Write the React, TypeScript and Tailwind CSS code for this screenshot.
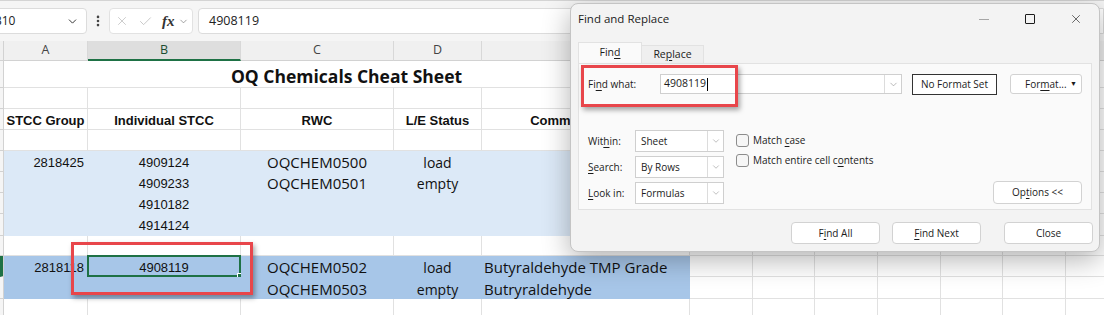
import type { ReactNode } from "react";
import clsx from "clsx";
import { X, Check, ChevronDown, EllipsisVertical } from "lucide-react";

const ARIAL = "font-['Liberation_Sans',Arial,sans-serif]";
const APTOS = "font-['Open_Sans',sans-serif]";
const SEGOE = "font-['Open_Sans',sans-serif]";

const GRID = "border-[#e1e1e1]";
const LIGHT = "bg-[#dce9f7] border-[#dce9f7]";
const DARK = "bg-[#a7c6e8] border-[#a7c6e8]";

const COL_W = ["w-[84px]", "w-[153px]", "w-[153px]", "w-[88px]", "w-[208px]"];
const EXTRA_W = ["w-[63px]", "w-[62px]", "w-[63px]", "w-[63px]", "w-[62px]", "w-[63px]", "w-[63px]"];

type CellDef = { t?: ReactNode; a?: "l" | "c" | "r"; f?: string; sel?: boolean };

function Cell({ w, fill, def }: { w: string; fill?: string; def?: CellDef }) {
  const align = def?.a ?? "c";
  return (
    <div
      className={clsx(
        "relative flex h-full shrink-0 items-center border-r border-b pt-[3px] whitespace-nowrap text-[#111]",
        w,
        fill ?? GRID,
        align === "l" && "justify-start pl-[2px]",
        align === "r" && "justify-end pr-[3px]",
        align === "c" && "justify-center",
        def?.f
      )}
    >
      {def?.t}
      {def?.sel && (
        <div className="absolute -top-px -left-px -right-px -bottom-px border-2 border-[#1e7145]">
          <div className="absolute -right-[4px] -bottom-[4px] h-[6px] w-[6px] border border-white bg-[#1e7145]" />
        </div>
      )}
    </div>
  );
}

function Row({ h, fill, cells, active }: { h: string; fill?: string; cells: (CellDef | undefined)[]; active?: boolean }) {
  return (
    <div className={clsx("flex", h)}>
      <div className={clsx("h-full w-[4px] shrink-0 border-r border-b border-[#d2d2d2] bg-[#f5f5f5]", active && "border-l-[3px] border-l-[#1e7145]")} />
      {COL_W.map((w, i) => (
        <Cell key={i} w={w} fill={fill} def={cells[i]} />
      ))}
      {EXTRA_W.map((w, i) => (
        <Cell key={"x" + i} w={w} />
      ))}
    </div>
  );
}

const num = clsx(ARIAL, "text-[13px]");
const rwc = clsx(APTOS, "text-[15px]");
const stat = clsx(APTOS, "text-[14px]");
const head = clsx(ARIAL, "text-[13px] font-bold");

function FormulaBar() {
  return (
    <div className={clsx("flex h-[41px] items-start border-t border-[#d4d4d4] bg-[#f5f5f5] pt-[7px]", SEGOE)}>
      <div className="-ml-[20px] flex h-[26px] w-[107px] items-center rounded-[4px] border border-[#dcdcdc] bg-white pl-[13px] pr-[7px] text-[12px] text-[#222]">
        B10
        <ChevronDown className="ml-auto text-[#333]" size={13} strokeWidth={1.8} />
      </div>
      <div className="flex h-[26px] w-[22px] items-center justify-center text-[#444]">
        <EllipsisVertical size={14} strokeWidth={2.5} />
      </div>
      <div className="flex h-[26px] w-[84px] items-center rounded-[4px] border border-[#e2e2e2] bg-white pl-[5px] text-[#bdbdbd]">
        <X size={14} strokeWidth={1.3} />
        <Check className="ml-[9px]" size={15} strokeWidth={1.3} />
        <span className="ml-[9px] font-['Liberation_Serif',serif] text-[15px] font-bold italic text-[#333]">fx</span>
        <ChevronDown className="ml-[3px] text-[#777]" size={11} strokeWidth={1.5} />
      </div>
      <div className="ml-[5px] flex h-[26px] flex-1 items-center rounded-l-[4px] border border-[#dcdcdc] bg-white pl-[10px] text-[12.5px] text-[#222]">
        4908119
      </div>
    </div>
  );
}

function ColumnHeaders() {
  const labels = ["A", "B", "C", "D", "E"];
  return (
    <div className={clsx("flex h-[20px] bg-[#f0f0f0] text-[12.5px] text-[#444]", SEGOE)}>
      <div className="h-full w-[4px] shrink-0 border-r border-b border-[#d2d2d2]" />
      {COL_W.map((w, i) => (
        <div
          key={i}
          className={clsx(
            "flex h-full shrink-0 items-center justify-center border-r border-[#d8d8d8]",
            w,
            i === 1 ? "border-b-2 border-b-[#1e7145] bg-[#dedede] text-[#1b4d32]" : "border-b border-b-[#d2d2d2]"
          )}
        >
          {labels[i]}
        </div>
      ))}
      {EXTRA_W.map((w, i) => (
        <div key={i} className={clsx("h-full shrink-0 border-r border-b border-[#d2d2d2]", w)} />
      ))}
    </div>
  );
}

function Sheet() {
  return (
    <div>
      <div className="flex h-[27px]">
        <div className="h-full w-[4px] shrink-0 border-r border-b border-[#d2d2d2] bg-[#f5f5f5]" />
        <div className={clsx("flex h-full w-[686px] shrink-0 items-center justify-center border-r border-b pt-[4px] text-[17.5px] font-bold text-[#111]", GRID, APTOS)}>
          OQ Chemicals Cheat Sheet
        </div>
        {EXTRA_W.map((w, i) => (
          <Cell key={i} w={w} />
        ))}
      </div>
      <Row h="h-[21px]" cells={[]} />
      <Row
        h="h-[21px]"
        cells={[
          { t: "STCC Group", f: head },
          { t: "Individual STCC", f: head },
          { t: "RWC", f: head },
          { t: "L/E Status", f: head },
          { t: "Commodity Name", f: head },
        ]}
      />
      <Row h="h-[21px]" cells={[]} />
      <Row
        h="h-[21px]"
        fill={LIGHT}
        cells={[
          { t: "2818425", a: "r", f: num },
          { t: "4909124", f: num },
          { t: "OQCHEM0500", f: rwc },
          { t: "load", f: stat },
        ]}
      />
      <Row h="h-[21px]" fill={LIGHT} cells={[undefined, { t: "4909233", f: num }, { t: "OQCHEM0501", f: rwc }, { t: "empty", f: stat }]} />
      <Row h="h-[21px]" fill={LIGHT} cells={[undefined, { t: "4910182", f: num }]} />
      <Row h="h-[22px]" fill={LIGHT} cells={[undefined, { t: "4914124", f: num }]} />
      <Row h="h-[20px]" cells={[]} />
      <Row
        h="h-[21px]"
        fill={DARK}
        active
        cells={[
          { t: "2818118", a: "r", f: num },
          { t: "4908119", f: num, sel: true },
          { t: "OQCHEM0502", f: rwc },
          { t: "load", f: stat },
          { t: "Butyraldehyde TMP Grade", a: "l", f: rwc },
        ]}
      />
      <Row
        h="h-[22px]"
        fill={DARK}
        cells={[undefined, undefined, { t: "OQCHEM0503", f: rwc }, { t: "empty", f: stat }, { t: "Butryraldehyde", a: "l", f: rwc }]}
      />
      <Row h="h-[21px]" cells={[]} />
    </div>
  );
}

function Select({ value }: { value: string }) {
  return (
    <div className="flex h-[22px] w-[89px] border border-[#cfcfcf] bg-white">
      <span className="flex flex-1 items-center pl-[5px]">{value}</span>
      <span className="flex w-[16px] items-center justify-center border-l border-[#dcdcdc] text-[#8a8a8a]">
        <ChevronDown size={10} strokeWidth={1.3} />
      </span>
    </div>
  );
}

function Box({ children }: { children: ReactNode }) {
  return (
    <div className="flex h-[20px] items-center">
      <span className="h-[13px] w-[13px] rounded-[3px] border border-[#8c8c8c] bg-[#f6f6f6]" />
      <span className="ml-[4px]">{children}</span>
    </div>
  );
}

function Btn({ children, className }: { children: ReactNode; className?: string }) {
  return (
    <div className={clsx("flex h-[22px] w-[89px] items-center justify-center rounded-[4px] border border-[#d2d2d2] bg-white", className)}>
      {children}
    </div>
  );
}

function FindDialog() {
  return (
    <div
      className={clsx(
        "absolute left-[570px] top-[3px] flex h-[249px] w-[530px] flex-col rounded-[8px] border border-[#c4c4c4] bg-[#f3f3f3] text-[10px] text-[#1b1b1b] shadow-[0_8px_28px_rgba(0,0,0,0.3)]",
        SEGOE
      )}
    >
      <div className="flex h-[30px] items-center">
        <span className="pl-[7px] text-[11.5px]">Find and Replace</span>
        <div className="ml-auto flex h-full">
          <div className="flex w-[46px] items-center justify-center">
            <div className="h-px w-[10px] bg-[#a6a6a6]" />
          </div>
          <div className="flex w-[46px] items-center justify-center">
            <div className="h-[10px] w-[10px] rounded-[1px] border border-[#1b1b1b]" />
          </div>
          <div className="flex w-[46px] items-center justify-center">
            <X size={14} strokeWidth={1.1} />
          </div>
        </div>
      </div>

      <div className="mt-[8px] flex items-end pl-[7px] text-[10.5px]">
        <div className="flex h-[21px] w-[64px] items-center justify-center border border-b-0 border-[#e2e2e2] bg-[#fafafa]">
          Fin<u className="underline-offset-2">d</u>
        </div>
        <div className="flex h-[18px] w-[62px] items-center justify-center border border-b-0 border-l-0 border-[#e2e2e2] bg-[#efefef]">
          Re<u className="underline-offset-2">p</u>lace
        </div>
      </div>

      <div className="mx-[7px] flex h-[147px] flex-col border border-[#e2e2e2] bg-[#fafafa] pt-[10px] pl-[9px] pr-[9px]">
        <div className="flex items-start">
          <span className="flex h-[20px] w-[72px] items-center">
            Fi<u className="underline-offset-2">n</u>d what:
          </span>
          <div className="flex h-[20px] w-[242px] border border-[#cfcfcf] bg-white">
            <span className="flex flex-1 items-center pl-[3px] text-[10.5px]">
              4908119
              <span className="ml-px h-[13px] w-px bg-black" />
            </span>
            <span className="flex w-[17px] items-center justify-center border-l border-[#dcdcdc] text-[#8a8a8a]">
              <ChevronDown size={11} strokeWidth={1.3} />
            </span>
          </div>
          <div className="ml-[10px] flex h-[21px] w-[85px] items-center justify-center border border-[#333] bg-white">No Format Set</div>
          <div className="ml-[13px] flex h-[20px] w-[72px] items-center rounded-[3px] border border-[#d2d2d2] bg-white pl-[14px]">
            For<u className="underline-offset-2">m</u>at...
            <span className="ml-auto mr-[4px] text-[7px]">▼</span>
          </div>
        </div>

        <div className="mt-[35px] flex">
          <div className="flex flex-col gap-[4px]">
            <div className="flex items-center">
              <span className="w-[47px]">
                Wit<u className="underline-offset-2">h</u>in:
              </span>
              <Select value="Sheet" />
            </div>
            <div className="flex items-center">
              <span className="w-[47px]">
                <u className="underline-offset-2">S</u>earch:
              </span>
              <Select value="By Rows" />
            </div>
            <div className="flex items-center">
              <span className="w-[47px]">
                <u className="underline-offset-2">L</u>ook in:
              </span>
              <Select value="Formulas" />
            </div>
          </div>
          <div className="ml-[12px] flex flex-col">
            <Box>
              Match <u className="underline-offset-2">c</u>ase
            </Box>
            <Box>
              Match entire cell c<u className="underline-offset-2">o</u>ntents
            </Box>
          </div>
          <Btn className="ml-auto h-[23px] self-end">
            Op<u className="underline-offset-2">t</u>ions &lt;&lt;
          </Btn>
        </div>
      </div>

      <div className="mt-[12px] flex justify-end pr-[6px]">
        <Btn>
          F<u className="underline-offset-2">i</u>nd All
        </Btn>
        <Btn className="ml-[12px] border-[#4a8fd6]">
          <u className="underline-offset-2">F</u>ind Next
        </Btn>
        <Btn className="ml-[23px]">Close</Btn>
      </div>
    </div>
  );
}

export default function App() {
  return (
    <div className="relative h-[315px] w-[1104px] overflow-hidden bg-white">
      <FormulaBar />
      <ColumnHeaders />
      <Sheet />
      <FindDialog />
      <div className="absolute left-[71px] top-[242px] h-[53px] w-[182px] border-[3px] border-[#e8464b] shadow-[2px_3px_5px_rgba(0,0,0,0.35)]" />
      <div className="absolute left-[581px] top-[65px] h-[42px] w-[157px] border-[3px] border-[#e8464b] shadow-[2px_3px_5px_rgba(0,0,0,0.35)]" />
    </div>
  );
}
